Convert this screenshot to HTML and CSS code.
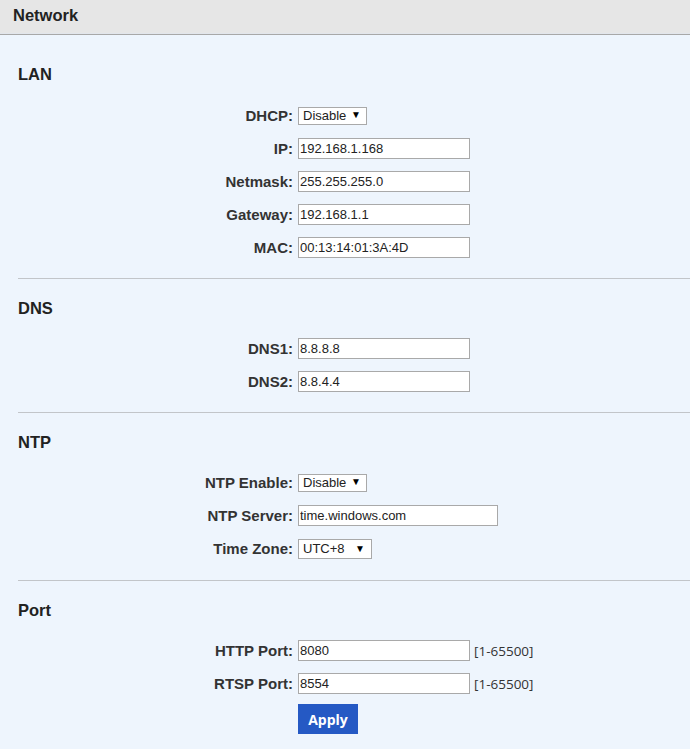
FILE: index.html
```html
<!DOCTYPE html>
<html>
<head>
<meta charset="utf-8">
<title>Network</title>
<link rel="stylesheet" href="styles.css">
</head>
<body>
<div class="header">Network</div>
<div class="content">
  <section class="section first">
    <h2 class="heading">LAN</h2>
    <div class="form">
      <label class="label">DHCP:</label>
      <div class="field"><span class="sel w69"><select><option>Disable</option><option>Enable</option></select></span></div>
      <label class="label">IP:</label>
      <div class="field"><input class="txt w172" type="text" value="192.168.1.168"></div>
      <label class="label">Netmask:</label>
      <div class="field"><input class="txt w172" type="text" value="255.255.255.0"></div>
      <label class="label">Gateway:</label>
      <div class="field"><input class="txt w172" type="text" value="192.168.1.1"></div>
      <label class="label">MAC:</label>
      <div class="field"><input class="txt w172" type="text" value="00:13:14:01:3A:4D"></div>
    </div>
  </section>
  <section class="section">
    <h2 class="heading">DNS</h2>
    <div class="form">
      <label class="label">DNS1:</label>
      <div class="field"><input class="txt w172" type="text" value="8.8.8.8"></div>
      <label class="label">DNS2:</label>
      <div class="field"><input class="txt w172" type="text" value="8.8.4.4"></div>
    </div>
  </section>
  <section class="section ntp">
    <h2 class="heading">NTP</h2>
    <div class="form">
      <label class="label">NTP Enable:</label>
      <div class="field"><span class="sel w69"><select><option>Disable</option><option>Enable</option></select></span></div>
      <label class="label">NTP Server:</label>
      <div class="field"><input class="txt w200" type="text" value="time.windows.com"></div>
      <label class="label">Time Zone:</label>
      <div class="field"><span class="sel w74"><select><option>UTC+8</option></select></span></div>
    </div>
  </section>
  <section class="section">
    <h2 class="heading">Port</h2>
    <div class="form">
      <label class="label">HTTP Port:</label>
      <div class="field"><input class="txt w172" type="text" value="8080"><span class="hint">[1-65500]</span></div>
      <label class="label">RTSP Port:</label>
      <div class="field"><input class="txt w172" type="text" value="8554"><span class="hint">[1-65500]</span></div>
    </div>
    <div class="actions"><button class="apply" type="button">Apply</button></div>
  </section>
</div>
</body>
</html>
```
FILE: styles.css
```css
html, body {
  margin: 0;
  padding: 0;
}
body {
  background: #eef5fd;
  font-family: "Liberation Sans", Arial, sans-serif;
  color: #222;
  width: 690px;
  height: 749px;
  overflow: hidden;
}
.header {
  height: 33px;
  line-height: 31px;
  background: #e6e6e6;
  padding-left: 13px;
  font-size: 16.5px;
  font-weight: bold;
  color: #222;
  border-bottom: 1px solid #e2e6ec;
  box-shadow: 0 1px 0 #a8a8a8;
  margin-bottom: 2px;
}
.content {
  margin-left: 18px;
}
.section {
  border-top: 1px solid #c2c5c9;
  padding-top: 19px;
  padding-bottom: 14px;
}
.section.first {
  border-top: none;
  padding-top: 28px;
}
.section.first .heading {
  margin-bottom: 15px;
}
.section.ntp {
  padding-bottom: 15px;
}
.heading {
  margin: 0 0 14px 0;
  height: 20px;
  line-height: 20px;
  font-size: 16.5px;
  font-weight: bold;
  color: #222;
}
.form {
  display: grid;
  grid-template-columns: 275px auto;
  column-gap: 5px;
  grid-auto-rows: 33px;
  align-items: center;
}
.label {
  text-align: right;
  font-size: 15px;
  font-weight: bold;
  color: #333;
}
.field {
  display: flex;
  align-items: center;
}
.txt {
  box-sizing: border-box;
  height: 21px;
  border: 1px solid #a9a9a9;
  background: #fff;
  padding: 0 1px;
  margin: 0;
  font-family: "Liberation Sans", Arial, sans-serif;
  font-size: 13px;
  color: #222;
  outline: none;
}
.w172 { width: 172px; }
.w200 { width: 200px; }
.sel {
  position: relative;
  display: inline-block;
}
.sel select {
  -webkit-appearance: none;
  appearance: none;
  box-sizing: border-box;
  width: 100%;
  height: 18px;
  border: 1px solid #a9a9a9;
  border-radius: 0;
  background: #fff;
  padding: 0 0 0 4px;
  margin: 0;
  font-family: "Liberation Sans", Arial, sans-serif;
  font-size: 13px;
  color: #222;
  outline: none;
}
.sel::after {
  content: "\25BC";
  position: absolute;
  right: 6px;
  top: 4px;
  font-size: 10px;
  line-height: 10px;
  color: #000;
  pointer-events: none;
}
.w69 { width: 69px; }
.w74 { width: 74px; }
.w74 select { height: 20px; }
.w74::after { top: 5px; right: 7px; }
.hint {
  margin-left: 4px;
  font-family: "Open Sans", sans-serif;
  font-size: 13.5px;
  color: #333;
}
.actions {
  padding-left: 280px;
  padding-top: 4px;
  padding-bottom: 14px;
}
.apply {
  display: block;
  width: 60px;
  height: 30px;
  border: none;
  background: #2559c4;
  color: #fff;
  font-family: "Open Sans", sans-serif;
  font-weight: bold;
  font-size: 14px;
  padding: 0;
  margin: 0;
  cursor: pointer;
}
```
